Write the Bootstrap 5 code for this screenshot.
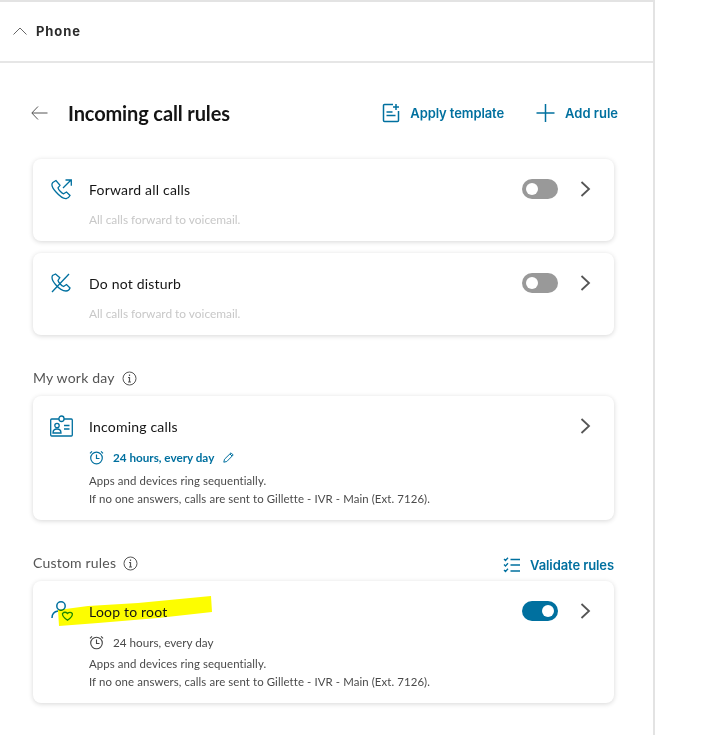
<!DOCTYPE html>
<html lang="en">
<head>
<meta charset="utf-8">
<title>Incoming call rules</title>
<link href="https://cdn.jsdelivr.net/npm/bootstrap@5.3.0/dist/css/bootstrap.min.css" rel="stylesheet">
<style>
html,body{height:735px;overflow:hidden;background:#fff}
body{font-family:"Lato",sans-serif;color:#111}
.panel-shell{width:655px;height:735px;border-top:2px solid #e3e3e3;border-right:2px solid #e3e3e3;overflow:hidden}
.top-head{height:61px;border-bottom:2px solid #e6e6e6;padding-left:13px;padding-bottom:2px;gap:9px}
.top-head span{font:700 13px "Inter",sans-serif;letter-spacing:.9px;color:#2b2b2b}
.content-area{padding:0 39px 0 33px}
.title-row{height:96px;padding-top:4px}
.title-row h1{font-size:20px;font-weight:700;margin:0 0 0 20px;letter-spacing:-.13px;color:#151515}
.back-arrow{margin-left:-2px}
.action-group{margin-right:-4px;gap:32px}
.action-link{font:600 13px "Inter",sans-serif;color:#00709f;text-decoration:none;gap:10px;letter-spacing:-.1px}
.flat-spacing{letter-spacing:0}
.rule-card{border:0;border-radius:8px;box-shadow:0 1px 5px rgba(0,0,0,.16);position:relative;padding:20px 23px 12px 18px}
.rule-card.short-card{padding-bottom:14px}
.card-gap{margin-bottom:12px}
.rule-top{height:20px}
.icon-slot{width:38px;flex:none}
.icon-up{margin-top:-1px}
.icon-left{margin-left:-1px}
.rule-name{margin-top:2px;font-size:14px;letter-spacing:.2px;color:#151515;line-height:18px;position:relative}
.rule-tail{height:20px;gap:22px}
.rule-body{margin-left:38px}
.faint{margin-top:14px;font-size:11.9px;color:#c8c8c8;line-height:14px}
.rule-text{font-size:11.4px;color:#4a4a4a;line-height:18px;letter-spacing:.1px}
.text-after-teal{margin-top:7px}
.text-after-gray{margin-top:5px}
.sched{margin-top:13px;font-size:11.7px;font-weight:700;gap:9px;line-height:16px}
.sched.teal{color:#00709f}
.sched.gray{color:#4a4a4a;font-weight:400}
.tog{width:36px;height:20px;border-radius:10px;background:#999;position:relative}
.tog::after{content:"";position:absolute;width:12px;height:12px;border-radius:50%;background:#fff;top:4px;left:4px}
.tog.on{background:#00709f}
.tog.on::after{left:20px}
.tog-space{width:36px}
.sec-label{font-size:14px;color:#555;gap:7px;letter-spacing:.2px;line-height:18px}
.marker{position:absolute;left:25px;top:15px;mix-blend-mode:multiply}
.sec-one{margin-top:34px;margin-bottom:9px}
.sec-two{margin-top:34px;margin-bottom:8px}
.link-low{padding-top:3px}
</style>
</head>
<body>
<div class="panel-shell">
  <div class="top-head d-flex align-items-center">
    <svg width="14" height="8" viewBox="0 0 14 8" fill="none" stroke="#666"><path d="M.5 7.500 7 1l6.500 6.500"/></svg>
    <span>Phone</span>
  </div>
  <div class="content-area">
    <div class="title-row d-flex align-items-center">
      <svg class="back-arrow" width="17" height="14" viewBox="0 0 17 14" fill="none" stroke="#555"><path d="M7 .5.800 7 7 13.500M1 7h15.500"/></svg>
      <h1>Incoming call rules</h1>
      <div class="ms-auto d-flex align-items-center action-group">
        <a class="action-link d-flex align-items-center" href="#">
          <svg width="18" height="20" viewBox="0 0 18 20" fill="none" stroke="#00709f" stroke-width="1.500"><path d="M11 1.500H2.500a1 1 0 0 0-1 1v15a1 1 0 0 0 1 1h13a1 1 0 0 0 1-1V8M14 1v6M11 4h6M4.500 9h6M4.500 12.500h9"/></svg>
          Apply template</a>
        <a class="action-link flat-spacing d-flex align-items-center" href="#">
          <svg width="19" height="18" viewBox="0 0 19 18" fill="none" stroke="#00709f" stroke-width="1.500"><path d="M9.500 0v18M.5 9h18"/></svg>
          Add rule</a>
      </div>
    </div>

    <div class="card rule-card short-card card-gap">
      <div class="rule-top d-flex align-items-start">
        <div class="icon-slot"><svg class="d-block" width="21" height="21" viewBox="0 0 21 21" fill="none" stroke="#00709f" stroke-width="1.300"><path d="M5 1.500 1.800 3.500C.3 5 1 8.500 5 13s8 7 10.500 6.500c1.500-.5 3-2 3.500-3l-3.500-3.500-3 1.800c-2-.7-5-4-5.500-6l2-2.500z"/><path d="M12 9l8-8M14.500 1H20.300V6.800"/></svg></div>
        <div class="rule-name flex-grow-1">Forward all calls</div>
        <div class="rule-tail d-flex align-items-center">
          <div class="tog"></div>
          <svg width="11" height="16" viewBox="0 0 11 16" fill="none" stroke="#555" stroke-width="1.800"><path d="M1.500 1l7.500 7-7.500 7"/></svg>
        </div>
      </div>
      <div class="rule-body faint">All calls forward to voicemail.</div>
    </div>

    <div class="card rule-card short-card">
      <div class="rule-top d-flex align-items-start">
        <div class="icon-slot"><svg class="d-block" width="20" height="20" viewBox="0 0 20 20" fill="none" stroke="#00709f" stroke-width="1.300"><path d="M4.500 1 1.500 2.500C.5 4.500 1.500 8 4.500 11.500s7 6.500 10.500 6.500c2 0 3.500-1.500 4-3l-3.500-3.500-3 2c-2-.7-5-4-5.500-6l1.800-2.800z"/><path d="M1 19 18 1"/></svg></div>
        <div class="rule-name flex-grow-1">Do not disturb</div>
        <div class="rule-tail d-flex align-items-center">
          <div class="tog"></div>
          <svg width="11" height="16" viewBox="0 0 11 16" fill="none" stroke="#555" stroke-width="1.800"><path d="M1.500 1l7.500 7-7.500 7"/></svg>
        </div>
      </div>
      <div class="rule-body faint">All calls forward to voicemail.</div>
    </div>

    <div class="sec-label d-flex align-items-center sec-one">My work day
      <svg width="15" height="15" viewBox="0 0 15 15" fill="none" stroke="#555"><circle cx="7.500" cy="7.500" r="6.500"/><path d="M6 6.500h1.500V11M6 11h3M7.500 3.500v1.500" stroke-width="1.200"/></svg>
    </div>

    <div class="card rule-card">
      <div class="rule-top d-flex align-items-start">
        <div class="icon-slot"><svg class="d-block icon-up icon-left" width="23" height="22" viewBox="0 0 23 22" fill="none" stroke="#00709f" stroke-width="1.300"><rect x=".7" y="4" width="21.600" height="17" rx="1"/><rect x="9" y="1" width="5" height="5.500" rx="2.500" fill="#fff"/><circle cx="7" cy="10.500" r="2.200"/><path d="M3 18c0-3 1.500-4 4-4s4 1 4 4zM14 10.500h5.500M14 14h5.500"/></svg></div>
        <div class="rule-name flex-grow-1">Incoming calls</div>
        <div class="rule-tail d-flex align-items-center">
          <div class="tog-space"></div>
          <svg width="11" height="16" viewBox="0 0 11 16" fill="none" stroke="#555" stroke-width="1.800"><path d="M1.500 1l7.500 7-7.500 7"/></svg>
        </div>
      </div>
      <div class="rule-body">
        <div class="sched teal d-flex align-items-center">
          <svg width="15" height="15" viewBox="0 0 15 15" fill="none" stroke="#00709f" stroke-width="1.200"><circle cx="7.500" cy="8" r="5.800"/><path d="M7.500 4.500V8.500H10.500M3 1.300 1 3.300M12 1.300l2 2"/></svg>
          <span>24 hours, every day</span>
          <svg width="11" height="11" viewBox="0 0 11 11" fill="none" stroke="#00709f"><path d="M.8 10.200l.7-3L8 .8l2.200 2.200L3.800 9.500zM7 2l2 2"/></svg>
        </div>
        <div class="rule-text text-after-teal">Apps and devices ring sequentially.<br>If no one answers, calls are sent to Gillette - IVR - Main (Ext. 7126).</div>
      </div>
    </div>

    <div class="d-flex align-items-start justify-content-between sec-two">
      <div class="sec-label d-flex align-items-center">Custom rules
        <svg width="15" height="15" viewBox="0 0 15 15" fill="none" stroke="#555"><circle cx="7.500" cy="7.500" r="6.500"/><path d="M6 6.500h1.500V11M6 11h3M7.500 3.500v1.500" stroke-width="1.200"/></svg>
      </div>
      <a class="action-link link-low d-flex align-items-center" href="#">
        <svg width="17" height="16" viewBox="0 0 17 16" fill="none" stroke="#00709f" stroke-width="1.300"><path d="M1 2l1.500 1.500L5 .8M1 7.500 2.500 9 5 6.300M1 13l1.500 1.500L5 11.800M7.500 2.500H17M7.500 8H17M7.500 14H17"/></svg>
        Validate rules</a>
    </div>

    <div class="card rule-card">
      <svg class="marker" width="156" height="32" viewBox="0 0 156 32"><polygon points="0,14 30,10 80,7 153,0 154,16 100,22 40,27 1,30" fill="#fdfd00"/></svg>
      <div class="rule-top d-flex align-items-start">
        <div class="icon-slot"><svg class="d-block icon-up" width="24" height="22" viewBox="0 0 24 22" fill="none" stroke="#00709f" stroke-width="1.500"><circle cx="10" cy="6" r="4.200"/><path d="M1 18c0-4 2.500-6.500 6-7"/><path d="M11.500 13.500c1.500-1.500 3.500-1.500 5 0 1.500-1.500 3.500-1.500 4.800 0 .7 2.500-2.300 5-4.800 6.800-2.500-1.800-5.500-4.300-5-6.800z" stroke="#1f8a2e" stroke-width="1.300"/></svg></div>
        <div class="rule-name flex-grow-1">Loop to root</div>
        <div class="rule-tail d-flex align-items-center">
          <div class="tog on"></div>
          <svg width="11" height="16" viewBox="0 0 11 16" fill="none" stroke="#555" stroke-width="1.800"><path d="M1.500 1l7.500 7-7.500 7"/></svg>
        </div>
      </div>
      <div class="rule-body">
        <div class="sched gray d-flex align-items-center">
          <svg width="15" height="15" viewBox="0 0 15 15" fill="none" stroke="#444" stroke-width="1.100"><circle cx="7.500" cy="8" r="5.800"/><path d="M7.500 4.500V8.500H10.500M3 1.300 1 3.300M12 1.300l2 2"/></svg>
          <span>24 hours, every day</span>
        </div>
        <div class="rule-text text-after-gray">Apps and devices ring sequentially.<br>If no one answers, calls are sent to Gillette - IVR - Main (Ext. 7126).</div>
      </div>
    </div>
  </div>
</div>
<script src="https://cdn.jsdelivr.net/npm/bootstrap@5.3.0/dist/js/bootstrap.bundle.min.js"></script>
</body>
</html>
